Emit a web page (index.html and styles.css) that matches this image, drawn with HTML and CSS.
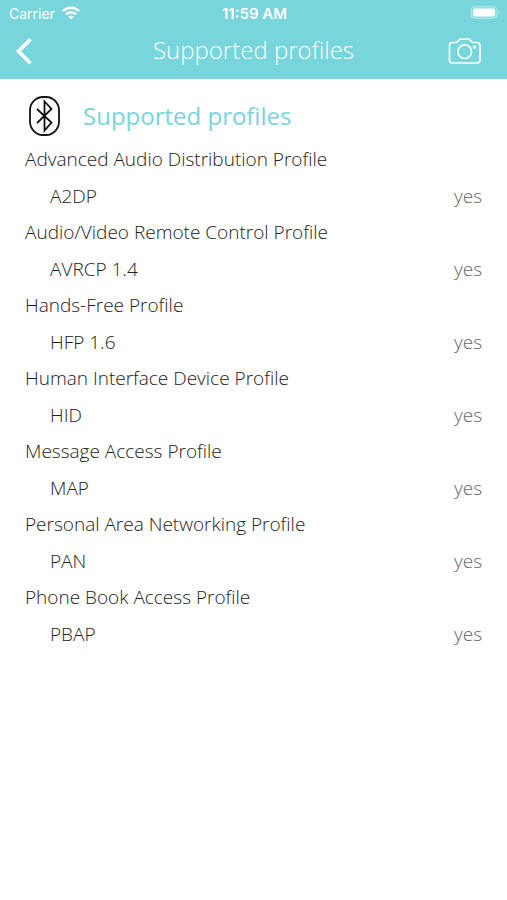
FILE: index.html
```html
<!DOCTYPE html>
<html lang="en">
<head>
    <meta charset="UTF-8">
    <meta name="viewport" content="width=device-width, initial-scale=1.0">
    <title>Supported profiles</title>
    <link rel="stylesheet" href="styles.css">
</head>
<body>
    <header class="header">
        <div class="status-bar">
            <div class="carrier">
                <span>Carrier</span>
                <svg width="18" height="14" viewBox="0 0 18 14" fill="none" stroke="#fff" stroke-width="2.4">
                    <path d="M1 5.2C5.400 .6 12.600 .6 17 5.200"/>
                    <path d="M4 8.500C6.800 5.700 11.200 5.700 14 8.500"/>
                    <path d="M6.300 10.600C7.900 9.200 10.100 9.200 11.700 10.600L9 13.400Z" fill="#fff" stroke="none"/>
                </svg>
            </div>
            <div class="time">11:59 AM</div>
            <div class="battery">
                <svg width="30" height="16" viewBox="0 0 30 16">
                    <rect x="1" y="1.500" width="26" height="12" rx="4" fill="#fff" fill-opacity=".15" stroke="#fff" stroke-opacity=".35"/>
                    <rect x="3" y="3.500" width="22" height="8" rx="2" fill="#fff"/>
                    <path d="M28.500 5.800v3.400q1-.6 1-1.700t-1-1.700z" fill="#fff" fill-opacity=".4"/>
                </svg>
            </div>
        </div>
        <nav class="nav-bar">
            <button type="button" class="nav-button" aria-label="Back">
                <svg width="18" height="28" viewBox="0 0 18 28" fill="none" stroke="#fff" stroke-width="3.600">
                    <path d="M14.500 2.200L2.500 14.200L14.500 26.200"/>
                </svg>
            </button>
            <h1>Supported profiles</h1>
            <button type="button" class="nav-button camera" aria-label="Take photo">
                <svg width="34" height="28" viewBox="0 0 34 28" fill="none" stroke="#fff" stroke-width="1.700" stroke-linejoin="round">
                    <path d="M4 5.500H8.500L11.500 2.500Q12 2 13 2H20Q21 2 21.500 2.500L24.500 5.500H29Q32 5.500 32 8.500V23Q32 26 29 26H4Q1.500 26 1.500 23V8.500Q1.500 5.500 4 5.500Z"/>
                    <circle cx="16.700" cy="14.700" r="6.800"/>
                    <circle cx="26.500" cy="10" r="1.700" fill="#fff" stroke="none"/>
                </svg>
            </button>
        </nav>
    </header>
    <main class="content">
        <div class="section-title">
            <svg width="32" height="40" viewBox="0 0 32 40" fill="none" stroke="#111" stroke-width="1.800">
                <rect x="1" y="1" width="29" height="38" rx="13" ry="13.500"/>
                <path d="M8 13L22.500 26.500L15.500 34.500V5.500L22.500 13L8 27"/>
            </svg>
            <h2>Supported profiles</h2>
        </div>
        <table class="profiles">
            <tbody>
                <tr><th colspan="2" scope="rowgroup">Advanced Audio Distribution Profile</th></tr>
                <tr><td class="name">A2DP</td><td class="value">yes</td></tr>
            </tbody>
            <tbody>
                <tr><th colspan="2" scope="rowgroup">Audio/Video Remote Control Profile</th></tr>
                <tr><td class="name">AVRCP 1.4</td><td class="value">yes</td></tr>
            </tbody>
            <tbody>
                <tr><th colspan="2" scope="rowgroup">Hands-Free Profile</th></tr>
                <tr><td class="name">HFP 1.6</td><td class="value">yes</td></tr>
            </tbody>
            <tbody>
                <tr><th colspan="2" scope="rowgroup">Human Interface Device Profile</th></tr>
                <tr><td class="name">HID</td><td class="value">yes</td></tr>
            </tbody>
            <tbody>
                <tr><th colspan="2" scope="rowgroup">Message Access Profile</th></tr>
                <tr><td class="name">MAP</td><td class="value">yes</td></tr>
            </tbody>
            <tbody>
                <tr><th colspan="2" scope="rowgroup">Personal Area Networking Profile</th></tr>
                <tr><td class="name">PAN</td><td class="value">yes</td></tr>
            </tbody>
            <tbody>
                <tr><th colspan="2" scope="rowgroup">Phone Book Access Profile</th></tr>
                <tr><td class="name">PBAP</td><td class="value">yes</td></tr>
            </tbody>
        </table>
    </main>
</body>
</html>
```
FILE: styles.css
```css
body {
    font-family: "Open Sans", sans-serif;
    font-weight: 300;
    margin: 0;
    background-color: #fff;
    color: #222;
}
svg {
    display: block;
}
.header {
    background-color: #78d5dc;
    color: #fff;
}
.status-bar, .nav-bar {
    display: grid;
    grid-template-columns: 1fr auto 1fr;
    align-items: center;
}
.status-bar {
    height: 26px;
    padding: 0 7px 0 9px;
    font-family: Inter, sans-serif;
    font-size: 14px;
    font-weight: 400;
}
.carrier {
    display: flex;
    align-items: center;
    gap: 7px;
}
.time {
    font-size: 15px;
    font-weight: 600;
}
.battery {
    justify-self: end;
}
.nav-bar {
    height: 50px;
    padding: 0 25px 3px 16px;
}
.nav-button {
    display: flex;
    justify-self: start;
    padding: 0;
    border: none;
    background: none;
    cursor: pointer;
}
.camera {
    justify-self: end;
}
h1, h2 {
    margin: 0;
    font-size: 24px;
    font-weight: 300;
    line-height: 36px;
}
.nav-bar h1 {
    margin-left: 9px;
    padding-bottom: 2px;
}
.content {
    padding: 17px 25px;
}
.section-title {
    display: flex;
    align-items: center;
    gap: 22px;
    padding-left: 4px;
}
h2 {
    color: #78d5dc;
    font-weight: 400;
}
.profiles {
    width: 100%;
    margin-top: 5px;
    border-collapse: collapse;
    font-size: 19px;
}
th, td {
    padding: 0;
    font-weight: 300;
    line-height: 37px;
    text-align: left;
}
td {
    line-height: 36px;
}
.profiles .name {
    padding-left: 25px;
}
.profiles .value {
    color: #666;
    text-align: right;
}
```
